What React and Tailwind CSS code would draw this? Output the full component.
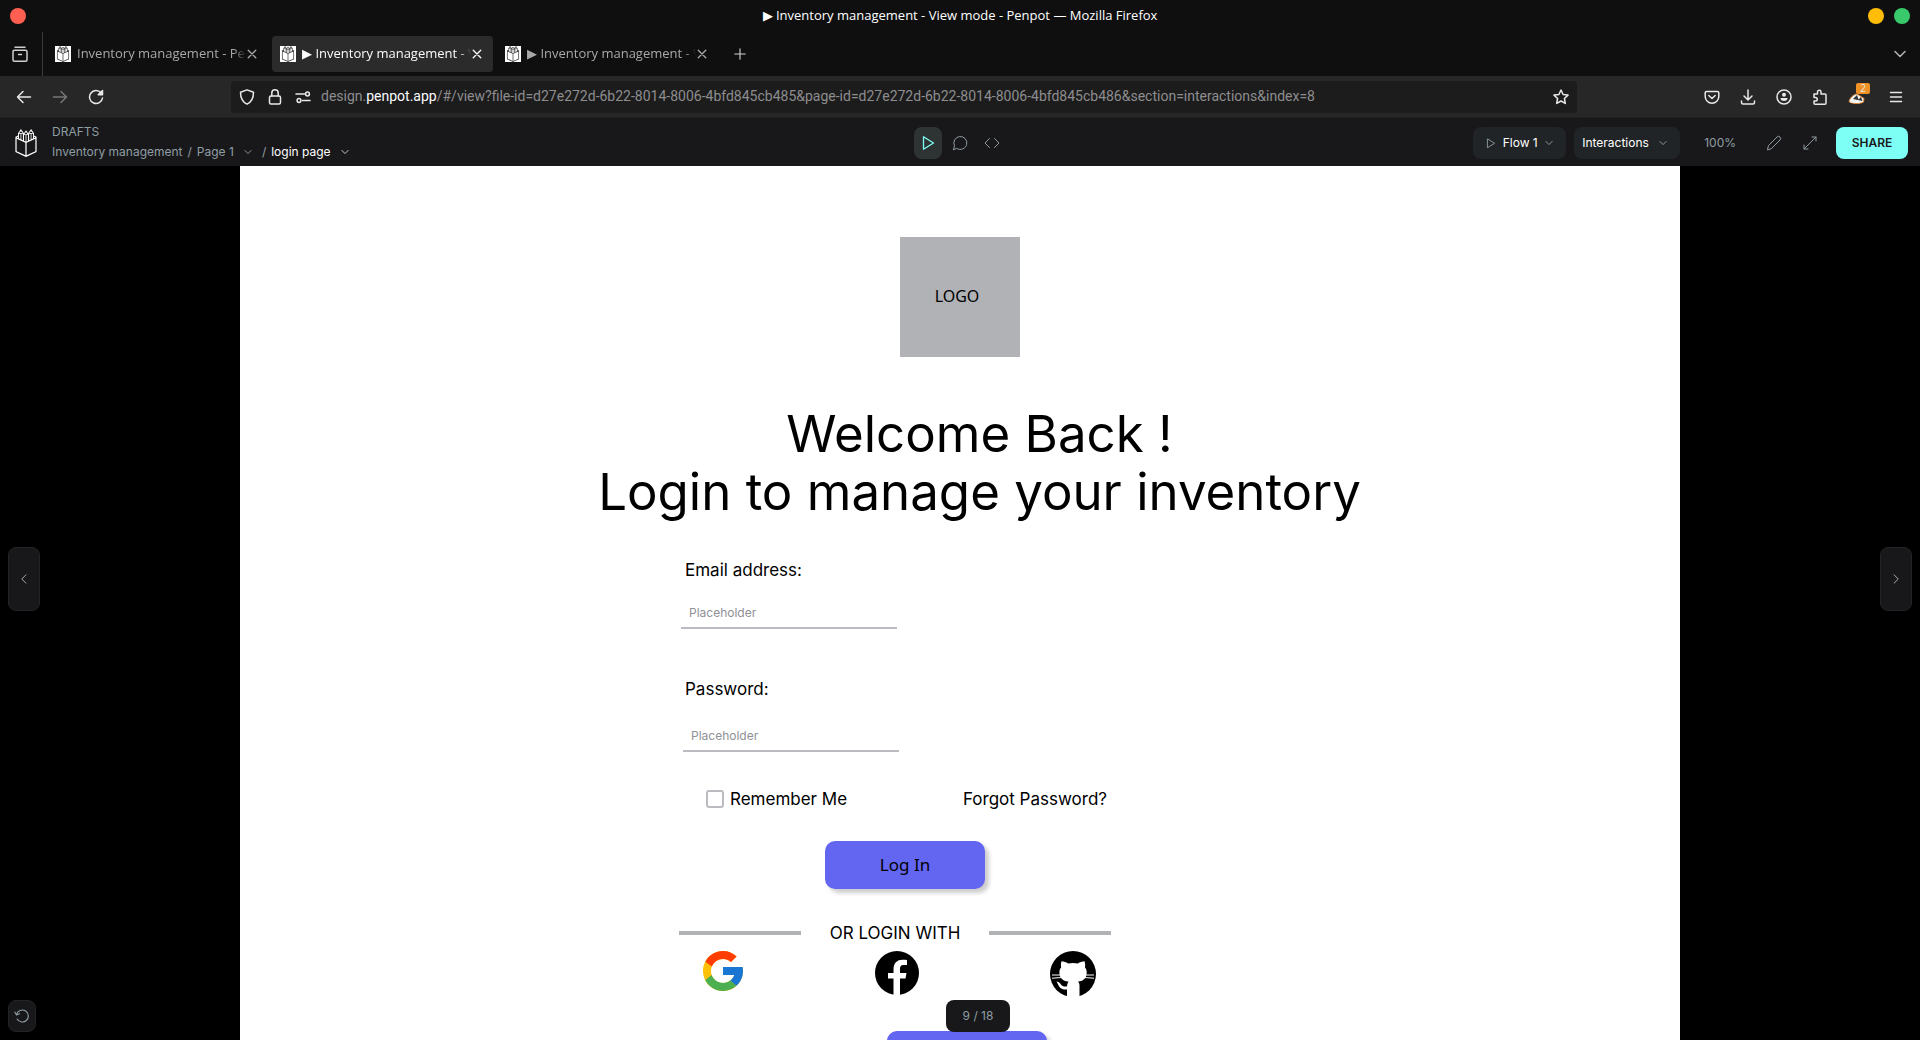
import React from "react";
import { SiPenpot } from "react-icons/si";
import { FcGoogle } from "react-icons/fc";

function Icon({ size = 16, children, className = "", sw = 1.5 }) {
  return (
    <svg
      width={size}
      height={size}
      viewBox="0 0 16 16"
      fill="none"
      stroke="currentColor"
      strokeWidth={sw}
      strokeLinecap="round"
      strokeLinejoin="round"
      className={"shrink-0 " + className}
      aria-hidden="true"
    >
      {children}
    </svg>
  );
}

const Chevron = ({ size = 12, className = "", sw = 1.5 }) => (
  <Icon size={size} sw={sw} className={className}>
    <path d="M3 5.5 8 10.5 13 5.5" />
  </Icon>
);

function Tab({ title, active }) {
  return (
    <div
      className={
        active
          ? "flex h-9 w-[221px] items-center rounded bg-[#2b2b2b] pr-2.5 pl-2 text-[#fbfbfe]"
          : "flex h-9 w-[221px] items-center rounded pr-2.5 pl-2 text-[#a8a8a8]"
      }
    >
      <span className="flex size-4 shrink-0 items-center justify-center bg-white text-[#333]">
        <SiPenpot size={16} />
      </span>
      <button
        type="button"
        className="ml-1.5 min-w-0 flex-1 overflow-hidden text-left text-[13px] whitespace-nowrap [mask-image:linear-gradient(to_left,transparent,black_12px)]"
      >
        {title}
      </button>
      <button type="button" aria-label="Close tab" className="flex">
        <Icon size={12} sw={1.8}>
          <path d="M3 3l10 10M13 3 3 13" />
        </Icon>
      </button>
    </div>
  );
}

function BrowserChrome() {
  return (
    <div className="bg-[#0f0f0f] font-['Open_Sans','Noto_Sans',sans-serif] text-white">
      <div className="flex h-8 items-center px-2.5">
        <div className="flex flex-1">
          <button type="button" aria-label="Close" className="size-4 rounded-full bg-[#ff5f50]" />
        </div>
        <div className="text-[13px] font-medium">▶ Inventory management - View mode - Penpot — Mozilla Firefox</div>
        <div className="flex flex-1 justify-end gap-2.5">
          <button type="button" aria-label="Minimize" className="size-4 rounded-full bg-[#ffbd07]" />
          <button type="button" aria-label="Maximize" className="size-4 rounded-full bg-[#38c96a]" />
        </div>
      </div>

      <div className="flex h-11 items-center">
        <div className="flex h-full w-[43px] items-center justify-center border-r border-[#3a3a3a] pr-0.5 text-[#cfcfcf]">
          <Icon size={16}>
            <path d="M3 1.2h10M2.5 4.2h11a1.5 1.5 0 0 1 1.5 1.5v8a1.5 1.5 0 0 1-1.5 1.5h-11A1.5 1.5 0 0 1 1 13.700v-8a1.500 1.500 0 0 1 1.500-1.500zM6.500 8.500h3" />
          </Icon>
        </div>
        <div className="ml-1 flex gap-1">
          <Tab title="Inventory management - Penpot" />
          <Tab title="▶ Inventory management - View mode" active />
          <Tab title="▶ Inventory management - View mode" />
        </div>
        <button type="button" aria-label="New tab" className="ml-4 text-[#d0d0d0]">
          <Icon size={12}>
            <path d="M8 1v14M1 8h14" />
          </Icon>
        </button>
        <button type="button" aria-label="List all tabs" className="mr-3 ml-auto text-[#b5b5b5]">
          <Chevron size={16} />
        </button>
      </div>

      <div className="flex h-[42px] items-center border-b border-[#202022] bg-[#272727] text-[#e8e8ea]">
        <div className="flex w-[231px] items-center gap-5 pl-4">
          <button type="button" aria-label="Back">
            <Icon>
              <path d="M14.500 8h-13M7 2.500 1.500 8 7 13.500" />
            </Icon>
          </button>
          <button type="button" aria-label="Forward" className="text-[#77777a]">
            <Icon>
              <path d="M1.500 8h13M9 2.500 14.500 8 9 13.500" />
            </Icon>
          </button>
          <button type="button" aria-label="Reload">
            <Icon>
              <path d="M14.500 9A6.500 6.500 0 1 1 13 3.800" />
              <path d="M14.500 1.500v4.300h-4.300z" fill="currentColor" />
            </Icon>
          </button>
        </div>
        <div className="flex h-8 flex-1 items-center gap-3 rounded bg-[#1c1c1c] px-2">
          <Icon>
            <path d="M8 .9 14.500 3.200C14.500 9 12.500 13 8 15.200 3.500 13 1.500 9 1.500 3.200z" />
          </Icon>
          <Icon>
            <rect x="2.500" y="7" width="11" height="8" rx="1.500" />
            <path d="M4.800 7V4a3.200 3.200 0 0 1 6.400 0v3" />
          </Icon>
          <Icon>
            <path d="M1 5h8.500M7.500 11.500H15" />
            <circle cx="12.500" cy="5" r="1.900" />
            <circle cx="4" cy="11.500" r="1.900" />
          </Icon>
          <div className="-ml-0.5 min-w-0 flex-1 truncate font-['Roboto',sans-serif] text-[14px] text-[#8d8d8f]">
            design.<span className="text-[#fbfbfe]">penpot.app</span>
            /#/view?file-id=d27e272d-6b22-8014-8006-4bfd845cb485&amp;page-id=d27e272d-6b22-8014-8006-4bfd845cb486&amp;section=interactions&amp;index=8
          </div>
          <button type="button" aria-label="Bookmark this page">
            <Icon>
              <path d="M8 1l2.100 4.500 4.900.6-3.600 3.400.9 4.900L8 12l-4.300 2.400.9-4.900L1 6.100l4.900-.6z" />
            </Icon>
          </button>
        </div>
        <div className="flex w-[343px] items-center justify-end gap-5 pr-4">
          <button type="button" aria-label="Save to Pocket">
            <Icon>
              <path d="M2.500 2.500h11a1.300 1.300 0 0 1 1.300 1.300V7.500a6.800 6.800 0 0 1-13.600 0V3.800a1.300 1.300 0 0 1 1.300-1.300zM4.800 6.500 8 9.500l3.200-3" />
            </Icon>
          </button>
          <button type="button" aria-label="Downloads">
            <Icon>
              <path d="M8 1v9.500M4 7l4 4 4-4M1.500 12v1.500a1.500 1.500 0 0 0 1.500 1.500h10a1.500 1.500 0 0 0 1.500-1.500V12" />
            </Icon>
          </button>
          <button type="button" aria-label="Account">
            <Icon>
              <circle cx="8" cy="8" r="7" />
              <circle cx="8" cy="5.800" r="2" fill="currentColor" stroke="none" />
              <path d="M4.500 9h7a3.500 3 0 0 1-7 0z" fill="currentColor" stroke="none" />
            </Icon>
          </button>
          <button type="button" aria-label="Extensions">
            <Icon>
              <path d="M2 5h3.500V3a1.700 1.700 0 0 1 3.500 0v2h4a1 1 0 0 1 1 1v8.200a1 1 0 0 1-1 1H3a1 1 0 0 1-1-1V12h1.500a1.700 1.700 0 0 0 0-3.500H2z" />
            </Icon>
          </button>
          <button type="button" aria-label="Privacy extension" className="relative w-5">
            <svg width="18" height="16" viewBox="0 0 18 16" aria-hidden="true">
              <path d="M1 12.500C2 9 5 5.500 9 5l7 4.500-.5 3.500c-3 2-11 2.200-14.500-.5z" fill="#f4f4f4" stroke="#e58a35" />
              <path d="M5 10 9 6l1.500 4.500L13 8l1.500 4z" fill="#333" />
              <path d="M2 13h9" stroke="#fff" />
            </svg>
            <span className="absolute -top-1.5 left-2 flex h-[11px] w-3.5 items-center justify-center rounded-xs bg-[#ee9226] text-[10px] leading-none">
              2
            </span>
          </button>
          <button type="button" aria-label="Menu">
            <Icon>
              <path d="M2.500 3.500h11M2.500 8h11M2.500 12.500h11" />
            </Icon>
          </button>
        </div>
      </div>
    </div>
  );
}

const PlayIcon = ({ className = "", size = 16 }) => (
  <Icon size={size} sw={1.3} className={className}>
    <path d="M3.500 1.800v12.400L13.500 8z" />
  </Icon>
);

function ViewerHeader() {
  return (
    <header className="grid h-12 grid-cols-[1fr_auto_1fr] items-center bg-[#18181a] px-3 pt-0.5 text-[12px] text-[#8f9da3]">
      <div className="flex items-center">
        <SiPenpot size={28} className="text-white" />
        <div className="ml-3 flex flex-col pb-0.5">
          <span className="leading-5">DRAFTS</span>
          <nav className="flex items-center gap-[5px] leading-5" aria-label="Breadcrumb">
            <span>Inventory management</span>
            <span>/</span>
            <span>Page 1</span>
            <Chevron className="ml-1" size={10} />
            <span className="ml-1">/</span>
            <span className="text-white">login page</span>
            <Chevron className="ml-1 text-[#d0d0d0]" size={10} />
          </nav>
        </div>
      </div>
      <div className="flex items-center">
        <button type="button" aria-label="View mode" className="flex h-8 w-7 items-center justify-center rounded-lg bg-[#2e3434] text-[#7efff5]">
          <PlayIcon />
        </button>
        <button type="button" aria-label="Comments" className="flex h-8 w-9 items-center justify-center">
          <Icon sw={1}>
            <path d="M1.500 14.500l1-3.600A6.500 6.500 0 1 1 5 13.600z" />
          </Icon>
        </button>
        <button type="button" aria-label="Inspect code" className="flex h-8 w-7 items-center justify-center">
          <Icon sw={1}>
            <path d="M5.500 3.500 1 8l4.500 4.500M10.500 3.500 15 8l-4.500 4.500" />
          </Icon>
        </button>
      </div>
      <div className="flex items-center justify-end">
        <button type="button" className="flex h-8 w-[93px] items-center justify-between rounded-lg bg-[#212426] px-3">
          <PlayIcon size={11} />
          <span className="text-white">Flow 1</span>
          <Chevron size={10} />
        </button>
        <button type="button" className="ml-2 flex h-8 w-[106px] items-center justify-between rounded-lg bg-[#212426] pr-3 pl-2">
          <span className="text-white">Interactions</span>
          <Chevron size={10} />
        </button>
        <span className="ml-6">100%</span>
        <button type="button" aria-label="Edit file" className="ml-[30px]">
          <Icon sw={1}>
            <path d="M1.500 14.500l1-4 8.500-8.500a1.800 1.800 0 0 1 3 3L5.500 13.500z" />
          </Icon>
        </button>
        <button type="button" aria-label="Full screen" className="ml-5">
          <Icon sw={1}>
            <path d="M2 14 14 2M10 2h4v4M6 14H2v-4" />
          </Icon>
        </button>
        <button type="button" className="ml-[18px] h-8 w-[72px] rounded-lg bg-[#7efff5] font-semibold text-[#18181a]">
          SHARE
        </button>
      </div>
    </header>
  );
}

const FacebookLogo = () => (
  <svg width="44" height="44" viewBox="0 0 44 44" aria-hidden="true">
    <circle cx="22" cy="22" r="22" />
    <path
      d="M18.500 44V27.500H13V22h5.500v-3.500c0-6.500 3.500-9.800 9-9.800 1.700 0 3.300.1 4.500.4v5h-3c-3.200 0-4 1.400-4 4.200V22h6.500l-1 5.500H25V44z"
      fill="#fff"
    />
  </svg>
);

const GithubLogo = () => (
  <svg width="46" height="46" viewBox="0 0 46 46" aria-hidden="true">
    <circle cx="23" cy="23" r="23" />
    <path
      d="M11.500 10.300c2.300 0 4.800 1 6.600 2.200a25 25 0 0 1 9.800 0c1.800-1.200 4.300-2.200 6.600-2.200.9 2.500.8 4.500.4 6 1.300 1.600 1.800 3.300 1.800 5.200 0 6.500-4 8.500-8.700 9.200 1 1 1.500 2.300 1.500 4v11.800h-12.500V38.500c-6 .6-7.500-2.200-8.800-4.700-.6-1.200-1-2.300-1.700-3.300 3.800.2 4.300 4.500 7.500 4.900 1.300.2 2.200.1 3.100-.2.100-2.100.6-3.500 1.500-4.500-4.700-.7-9.200-2.700-9.200-9.200 0-1.900.5-3.600 1.800-5.200-.4-1.500-.5-3.500.3-6z"
      fill="#fff"
    />
    <path d="M2 24h9M2 27.200l10-.7M44 24h-9M44 27.200l-10-.7" fill="none" stroke="#fff" />
  </svg>
);

const field =
  "block h-8 w-[216px] border-b-2 border-[#bbbbc1] bg-transparent px-2 text-[12px] text-black outline-none placeholder:text-[#8f9097]";
const primary =
  "h-12 w-40 rounded-[10px] bg-[#6366f1] text-center font-['Noto_Sans',sans-serif] text-[17px] shadow-[4px_4px_4px_rgba(0,0,0,0.2)]";

function LoginBoard() {
  return (
    <main className="mx-auto h-full w-3/4 overflow-hidden bg-white pt-[71px] text-[17px] leading-6 text-black">
      <div className="mx-auto flex size-[120px] items-center justify-center bg-[#b1b2b5] pr-1.5 pb-0.5 font-['Noto_Sans',sans-serif] text-[16px]">
        LOGO
      </div>
      <h1 className="mt-12 pl-[39px] text-center text-[51px] leading-[58px]">
        Welcome Back !
        <br />
        Login to manage your inventory
      </h1>

      <div className="pr-[130px]">
        <form className="mx-auto w-[432px] pt-[37px]" onSubmit={(e) => e.preventDefault()}>
          <label htmlFor="email" className="ml-1.5 block">
            Email address:
          </label>
          <input id="email" type="email" placeholder="Placeholder" className={field + " mt-[15px] ml-0.5"} />

          <label htmlFor="password" className="mt-12 ml-1.5 block">
            Password:
          </label>
          <input id="password" type="password" placeholder="Placeholder" className={field + " mt-[19px] ml-1"} />

          <div className="mt-[35px] flex items-center justify-between pr-1 pl-[27px]">
            <label className="flex items-center gap-1.5">
              <input type="checkbox" className="size-[18px] appearance-none rounded-[3px] border-2 border-[#bbbbc1]" />
              Remember Me
            </label>
            <a href="#forgot">Forgot Password?</a>
          </div>

          <button type="submit" className={primary + " mt-[30px] ml-[146px] block"}>
            Log In
          </button>

          <div className="mt-8 flex items-center justify-between">
            <hr className="w-[122px] border-t-4 border-[#b1b2b5]" />
            <span>OR LOGIN WITH</span>
            <hr className="w-[122px] border-t-4 border-[#b1b2b5]" />
          </div>

          <div className="mt-1.5 flex items-start justify-between pr-[15px] pl-6">
            <button type="button" aria-label="Log in with Google" className="-m-1">
              <FcGoogle size={48} />
            </button>
            <button type="button" aria-label="Log in with Facebook">
              <FacebookLogo />
            </button>
            <button type="button" aria-label="Log in with GitHub">
              <GithubLogo />
            </button>
          </div>

          <button type="button" aria-label="Sign up" className={primary + " mt-[34px] ml-52 block"} />
        </form>
      </div>
    </main>
  );
}

export default function App() {
  return (
    <div className="flex h-screen flex-col overflow-hidden bg-black font-['Inter',sans-serif]">
      <BrowserChrome />
      <ViewerHeader />
      <div className="relative min-h-0 flex-1">
        <LoginBoard />
        <button
          type="button"
          aria-label="Previous board"
          className="absolute top-[381px] left-2 flex h-16 w-8 items-center justify-center rounded-lg border border-[#212426] bg-[#18181a] text-[#b5c0c4]"
        >
          <Icon size={12} sw={1.2}>
            <path d="M10.500 2.500 5 8l5.500 5.500" />
          </Icon>
        </button>
        <button
          type="button"
          aria-label="Next board"
          className="absolute top-[381px] right-2 flex h-16 w-8 items-center justify-center rounded-lg border border-[#212426] bg-[#18181a] text-[#b5c0c4]"
        >
          <Icon size={12} sw={1.2}>
            <path d="M5.500 2.500 11 8l-5.500 5.500" />
          </Icon>
        </button>
        <button
          type="button"
          aria-label="Reset"
          className="absolute bottom-2 left-2 flex h-8 w-7 items-center justify-center rounded-lg border border-[#212426] bg-[#18181a] text-[#8f9da3]"
        >
          <Icon sw={1.100}>
            <path d="M2.500 6.500a6 6 0 1 1 .6 4.500M.8 4l1.700 3 3-1.300" />
          </Icon>
        </button>
        <div className="absolute inset-x-0 bottom-2 flex justify-center pl-9">
          <span className="flex h-8 w-16 items-center justify-center rounded-lg bg-[#18181a] text-[12px] text-[#8f9da3]">
            9 / 18
          </span>
        </div>
      </div>
    </div>
  );
}
